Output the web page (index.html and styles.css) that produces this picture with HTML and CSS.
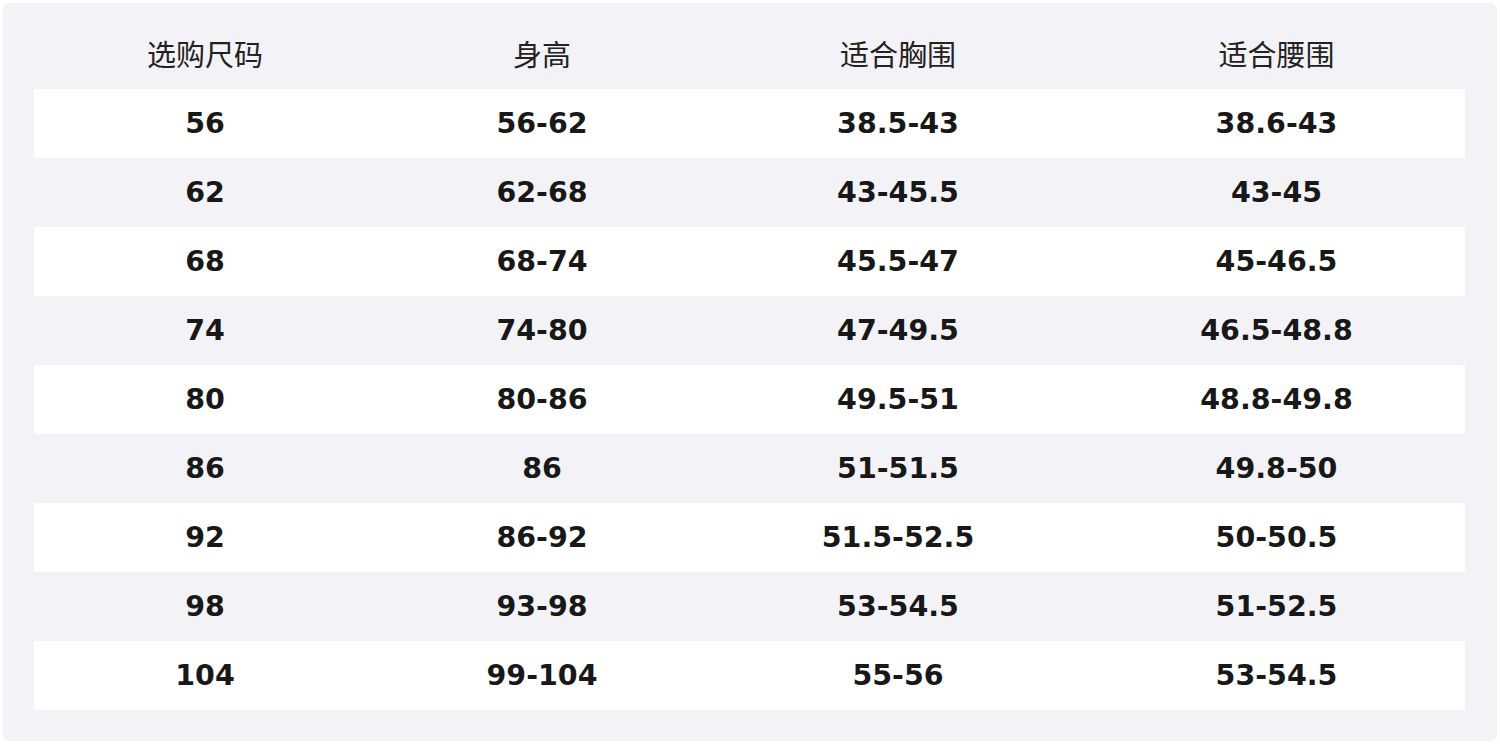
FILE: index.html
```html
<!DOCTYPE html>
<html lang="zh">
<head>
<meta charset="utf-8">
<link rel="stylesheet" href="styles.css">
</head>
<body>
<div class="panel">
  <table class="size-table">
    <colgroup>
      <col class="c1"><col class="c2"><col class="c3"><col class="c4">
    </colgroup>
    <thead>
      <tr><th>选购尺码</th><th>身高</th><th>适合胸围</th><th>适合腰围</th></tr>
    </thead>
    <tbody>
      <tr><td>56</td><td>56-62</td><td>38.5-43</td><td>38.6-43</td></tr>
      <tr><td>62</td><td>62-68</td><td>43-45.5</td><td>43-45</td></tr>
      <tr><td>68</td><td>68-74</td><td>45.5-47</td><td>45-46.5</td></tr>
      <tr><td>74</td><td>74-80</td><td>47-49.5</td><td>46.5-48.8</td></tr>
      <tr><td>80</td><td>80-86</td><td>49.5-51</td><td>48.8-49.8</td></tr>
      <tr><td>86</td><td>86</td><td>51-51.5</td><td>49.8-50</td></tr>
      <tr><td>92</td><td>86-92</td><td>51.5-52.5</td><td>50-50.5</td></tr>
      <tr><td>98</td><td>93-98</td><td>53-54.5</td><td>51-52.5</td></tr>
      <tr><td>104</td><td>99-104</td><td>55-56</td><td>53-54.5</td></tr>
    </tbody>
  </table>
</div>
</body>
</html>
```
FILE: styles.css
```css
html, body {
  margin: 0;
  padding: 0;
  background: #ffffff;
}
.panel {
  margin: 3px;
  height: 738px;
  box-sizing: border-box;
  background: #f3f3f7;
  border-radius: 6px;
  padding: 17px 32px 31px 31px;
}
.size-table {
  width: 1431px;
  border-collapse: collapse;
  table-layout: fixed;
}
.c1 { width: 342px; }
.c2 { width: 332px; }
.c3 { width: 380px; }
.c4 { width: 377px; }
.size-table th {
  height: 66px;
  padding: 0 0 3px 0;
  text-align: center;
  font-family: "Noto Sans CJK SC", "Noto Sans", sans-serif;
  font-weight: 400;
  font-size: 29px;
  color: #222222;
  vertical-align: middle;
}
.size-table td {
  height: 69px;
  padding: 0;
  text-align: center;
  vertical-align: middle;
  font-family: "DejaVu Sans", sans-serif;
  font-weight: 700;
  font-size: 28.5px;
  color: #181818;
}
.size-table tbody tr:nth-child(odd) {
  background: #ffffff;
}
.size-table tbody tr:nth-child(even) {
  background: #f3f3f7;
}
```
